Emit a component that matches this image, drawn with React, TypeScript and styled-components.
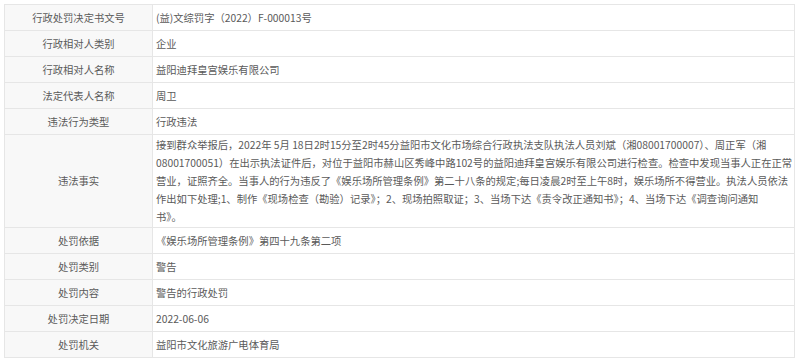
import React from "react";
import styled, { createGlobalStyle } from "styled-components";

const GlobalStyle = createGlobalStyle`
  html, body {
    margin: 0;
    padding: 0;
    background: #ffffff;
  }
  body {
    font-family: "Noto Sans CJK SC", "Microsoft YaHei", sans-serif;
  }
`;

const rows: { label: string; value: string | string[] }[] = [
  { label: "行政处罚决定书文号", value: "(益)文综罚字（2022）F-000013号" },
  { label: "行政相对人类别", value: "企业" },
  { label: "行政相对人名称", value: "益阳迪拜皇宫娱乐有限公司" },
  { label: "法定代表人名称", value: "周卫" },
  { label: "违法行为类型", value: "行政违法" },
  {
    label: "违法事实",
    value: [
      "接到群众举报后，2022年 5月 18日2时15分至2时45分益阳市文化市场综合行政执法支队执法人员刘斌（湘08001700007）、周正军（湘",
      "08001700051）在出示执法证件后，对位于益阳市赫山区秀峰中路102号的益阳迪拜皇宫娱乐有限公司进行检查。检查中发现当事人正在正常",
      "营业，证照齐全。当事人的行为违反了《娱乐场所管理条例》第二十八条的规定;每日凌晨2时至上午8时，娱乐场所不得营业。执法人员依法",
      "作出如下处理;1、制作《现场检查（勘验）记录》；2、现场拍照取证；3、当场下达《责令改正通知书》；4、当场下达《调查询问通知",
      "书》。",
    ],
  },
  { label: "处罚依据", value: "《娱乐场所管理条例》第四十九条第二项" },
  { label: "处罚类别", value: "警告" },
  { label: "处罚内容", value: "警告的行政处罚" },
  { label: "处罚决定日期", value: "2022-06-06" },
  { label: "处罚机关", value: "益阳市文化旅游广电体育局" },
];

export default function App() {
  return (
    <Page>
      <GlobalStyle />
      <InfoTable>
        <colgroup>
          <col style={{ width: 148 }} />
          <col />
        </colgroup>
        <tbody>
          {rows.map((r) => {
            const multi = Array.isArray(r.value);
            return (
              <tr key={r.label}>
                <LabelCell>{r.label}</LabelCell>
                <ValueCell $multi={multi}>
                  {multi
                    ? (r.value as string[]).map((line, i) => (
                        <Line key={i}>{line}</Line>
                      ))
                    : r.value}
                </ValueCell>
              </tr>
            );
          })}
        </tbody>
      </InfoTable>
    </Page>
  );
}

const Page = styled.div`
  padding: 4px 5px 0 4px;
`;

const InfoTable = styled.table`
  width: 100%;
  table-layout: fixed;
  border-collapse: collapse;
  border: 1px solid #e6e6e6;
  font-size: 10.3px;
  color: #5a5a5a;
`;

const LabelCell = styled.td`
  height: 25px;
  padding: 0 4px;
  background: #f8f8f8;
  border: 1px solid #e6e6e6;
  text-align: center;
  line-height: 18px;
  vertical-align: middle;
`;

const ValueCell = styled.td<{ $multi?: boolean }>`
  height: 25px;
  padding: ${(p) => (p.$multi ? "1px 4px 1px 3px" : "0 4px 0 3px")};
  background: #ffffff;
  border: 1px solid #e6e6e6;
  line-height: 18px;
  vertical-align: middle;
  white-space: nowrap;
`;

const Line = styled.div`
  white-space: nowrap;
`;
